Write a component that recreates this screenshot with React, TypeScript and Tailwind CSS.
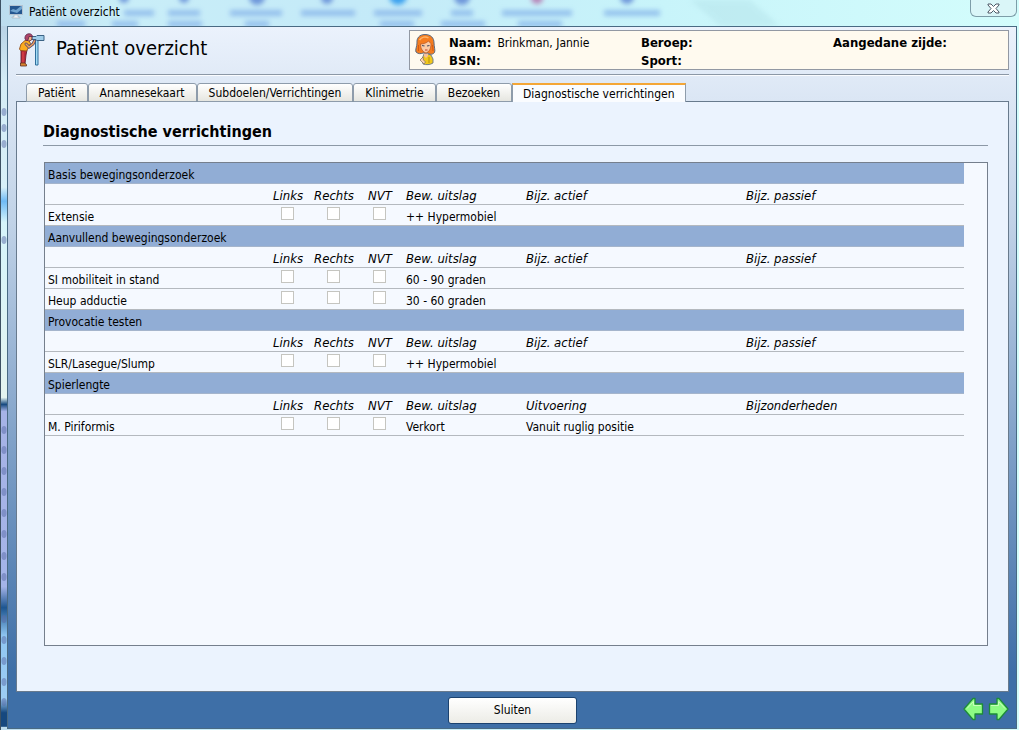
import { useState } from 'react'

type Row = { name: string; result: string; active?: string; passive?: string }
type Section = { title: string; columns: [string, string, string]; rows: Row[] }

const tabs = ['Patiënt', 'Anamnesekaart', 'Subdoelen/Verrichtingen', 'Klinimetrie', 'Bezoeken', 'Diagnostische verrichtingen']

const sections: Section[] = [
  {
    title: 'Basis bewegingsonderzoek',
    columns: ['Bew. uitslag', 'Bijz. actief', 'Bijz. passief'],
    rows: [{ name: 'Extensie', result: '++ Hypermobiel' }],
  },
  {
    title: 'Aanvullend bewegingsonderzoek',
    columns: ['Bew. uitslag', 'Bijz. actief', 'Bijz. passief'],
    rows: [
      { name: 'SI mobiliteit in stand', result: '60 - 90 graden' },
      { name: 'Heup adductie', result: '30 - 60 graden' },
    ],
  },
  {
    title: 'Provocatie testen',
    columns: ['Bew. uitslag', 'Bijz. actief', 'Bijz. passief'],
    rows: [{ name: 'SLR/Lasegue/Slump', result: '++ Hypermobiel' }],
  },
  {
    title: 'Spierlengte',
    columns: ['Bew. uitslag', 'Uitvoering', 'Bijzonderheden'],
    rows: [{ name: 'M. Piriformis', result: 'Verkort', active: 'Vanuit ruglig positie' }],
  },
]

const sides = ['Links', 'Rechts', 'NVT']

// toolbar captions of the window behind: x, y, width
const smudges = [
  [124, 13, 30], [168, 13, 32], [230, 13, 52], [301, 13, 54], [374, 13, 48], [451, 13, 22], [502, 13, 70], [604, 13, 56],
  [57, 24, 28], [112, 24, 26], [168, 24, 34], [245, 24, 24], [380, 24, 34], [441, 24, 44], [518, 24, 44],
]

// small marks that shine through the left window edge
const edgeDots = [112, 128, 144, 240, 430, 450, 471, 492, 513, 534, 556, 577, 619, 640, 661, 682, 702]

function GlassBackdrop() {
  return (
    <svg className="absolute inset-0 h-full w-full" aria-hidden="true">
      <defs>
        <linearGradient id="glass" x1="0" x2="1" y1="0" y2="0">
          <stop offset="0" stopColor="#bcdcee" />
          <stop offset="0.12" stopColor="#c9eef8" />
          <stop offset="0.35" stopColor="#c4eaf8" />
          <stop offset="0.65" stopColor="#c8f4fa" />
          <stop offset="1" stopColor="#d3fdfc" />
        </linearGradient>
        <filter id="soft" x="-50%" y="-50%" width="200%" height="200%">
          <feGaussianBlur stdDeviation="2.500" />
        </filter>
        <linearGradient id="edge" x1="0" x2="0" y1="0" y2="1">
          <stop offset="0" stopColor="#b9d3e6" />
          <stop offset="0.08" stopColor="#d4ecf6" />
          <stop offset="0.23" stopColor="#d8f0f8" />
          <stop offset="0.25" stopColor="#6fbaf5" />
          <stop offset="0.28" stopColor="#d5f4fb" />
          <stop offset="0.53" stopColor="#e4f4f0" />
          <stop offset="0.54" stopColor="#174a80" />
          <stop offset="0.55" stopColor="#a6b3e6" />
          <stop offset="0.8" stopColor="#a4b4e8" />
          <stop offset="0.83" stopColor="#1d5590" />
          <stop offset="0.87" stopColor="#8fc6f2" />
          <stop offset="0.96" stopColor="#9dcdf3" />
          <stop offset="0.98" stopColor="#16487f" />
        </linearGradient>
      </defs>
      <rect width="100%" height="100%" fill="url(#glass)" />
      <rect y="26" width="7" height="96%" fill="url(#edge)" />
      <path d="M690 0h60l30 26h-60z" fill="#b5e3ea" opacity="0.5" filter="url(#soft)" />
      <g filter="url(#soft)">
        {smudges.map(([x, y, w]) => (
          <rect key={`${x}-${y}`} x={x} y={y - 3} width={w} height="6" fill="#79a7e6" opacity="0.65" />
        ))}
        <g fill="#6e97da">
          <circle cx="124" cy="-2" r="5" />
          <circle cx="184" cy="-2" r="5" />
          <circle cx="257" cy="-3" r="8" />
          <circle cx="327" cy="-2" r="6" />
          <circle cx="398" cy="-4" r="9" fill="#3da2ef" />
          <circle cx="462" cy="-3" r="8" />
          <circle cx="537" cy="-2" r="6" fill="#b784b8" />
          <circle cx="627" cy="-3" r="7" />
        </g>
      </g>
      {edgeDots.map((y) => (
        <ellipse key={y} cx="4" cy={y} rx="2.500" ry="4" fill="#5a6ca8" opacity="0.5" />
      ))}
      <rect width="1" height="100%" fill="#3d5163" />
    </svg>
  )
}

function MonitorIcon() {
  return (
    <svg width="14" height="14" viewBox="0 0 14 14" aria-hidden="true">
      <rect x="0.5" y="0.5" width="13" height="9" fill="#e9f0f5" stroke="#b4c4d2" />
      <rect x="1" y="1" width="12" height="8" fill="#24568f" />
      <path d="M1 6l3-2 3 1 5-4h1v3L8 8z" fill="#6fa3cf" />
      <path d="M5 10h4v2h2v1H3v-1h2z" fill="#eef2f6" stroke="#9aa6b2" strokeWidth="0.5" />
    </svg>
  )
}

function SpyglassIcon() {
  return (
    <svg width="28" height="34" viewBox="0 0 28 34" aria-hidden="true">
      <path d="M17.500 7h2.500v25h-2.500z" fill="#a4dcf5" stroke="#2f6f9c" />
      <path d="M14 3.500h4l1-1h7v5h-7l-1-1h-4z" fill="#9fcdea" stroke="#3b6385" />
      <path d="M3 17l6 0-1 5-1 9H3l0-8z" fill="#b9283c" stroke="#64202f" strokeWidth="0.9" />
      <path d="M5 19v11" stroke="#e04a4a" />
      <path d="M2.500 30h4l2 1.500V33h-6z" fill="#d9822f" stroke="#5a3020" strokeWidth="0.8" />
      <path d="M1.500 16l1.500-5 4-3.500h4l1.500 3-2 4-2 3.500-6-.5z" fill="#fbab1f" stroke="#94501b" strokeWidth="0.9" />
      <path d="M8 11l3 3 4-3 1.500-3" fill="none" stroke="#51496b" strokeWidth="3" strokeLinecap="round" />
      <path d="M8 11l3 3 4-3 1.500-3" fill="none" stroke="#f0a05c" strokeWidth="1.400" strokeLinecap="round" />
      <circle cx="11" cy="5" r="3" fill="#f2b183" stroke="#6e2936" strokeWidth="0.8" />
      <path d="M7 6c-1-6 7-7 7.500-2.500H11L10 7C9 8 8 7.500 7 6z" fill="#b04468" stroke="#55284a" strokeWidth="0.8" />
    </svg>
  )
}

function PatientIcon() {
  return (
    <svg width="22" height="32" viewBox="0 0 22 32" aria-hidden="true">
      <path d="M9 20h4l3 1 2 4v4c-3 2-7 2-10 1l-1-5z" fill="#f2c81b" stroke="#66758a" strokeWidth="0.9" />
      <path d="M9 19h4v3l-2 2-2-2z" fill="#f7c09a" />
      <path d="M8 23l-3 3 4 4 1.500-2-2-2z" fill="#fbd5b5" stroke="#7e6a5c" strokeWidth="0.7" />
      <path d="M14 23v6" stroke="#b48d12" />
      <path d="M10 .5C4 .5 1.500 4.500 2 9c0 3-2 7-1 9 2 2 5 2 7 1h5c2 2 5 1.500 6.500-.5 1-2-.5-6-.5-9.500C19 4 16 .5 10 .5z" fill="#f57c1f" stroke="#596a82" />
      <path d="M5.500 10c3 0 6-1 8-3 1 1.500 2 2 2.500 2.500C16 15 14 18 11 19c-3-1-5.500-4-5.500-9z" fill="#fbcba6" stroke="#b5521e" strokeWidth="0.7" />
      <path d="M7 11.500l2.500.5M12 12l2.500-.5" stroke="#454e64" strokeWidth="1.200" />
      <path d="M10 16h2.500" stroke="#bd3c33" />
      <path d="M4.500 6c2-3 6-4 9-2" fill="none" stroke="#ffb367" strokeWidth="1.500" />
      <path d="M3.500 11v6M17.500 11l.5 6" stroke="#d35a14" />
    </svg>
  )
}

function ArrowIcon({ flip = false }: { flip?: boolean }) {
  return (
    <svg width="21" height="24" viewBox="0 0 21 24" className={flip ? '-scale-x-100' : ''} aria-hidden="true">
      <path d="M1 12L10 1.500h2V7h7.500v10H12v5.500h-2z" fill="#8dfc84" stroke="#1d8c39" strokeWidth="1.300" strokeLinejoin="round" />
      <path d="M4 11.500l6.500-7V8.500h7.500" fill="none" stroke="#c8ffbc" />
    </svg>
  )
}

function PatientField({ label, value }: { label: string; value?: string }) {
  return (
    <div className="flex gap-1.5 whitespace-nowrap">
      <dt className="text-[13px] font-bold">{label}</dt>
      <dd>{value}</dd>
    </div>
  )
}

function SectionRows({ section }: { section: Section }) {
  return (
    <tbody>
      <tr className="h-[21px] bg-[#91add5]">
        <th colSpan={7} scope="rowgroup" className="border-b border-[#a5b5cc] px-[3px] pt-[3px] text-left font-normal">
          {section.title}
        </th>
      </tr>
      <tr className="h-[21px] text-[13px] italic">
        <td className="border-b border-[#b4b9bf]" />
        {sides.map((side) => (
          <th key={side} scope="col" className="border-b border-[#b4b9bf] pt-[3px] text-center font-normal">{side}</th>
        ))}
        {section.columns.map((col) => (
          <th key={col} scope="col" className="border-b border-[#b4b9bf] px-[3px] pt-[3px] text-left font-normal">{col}</th>
        ))}
      </tr>
      {section.rows.map((row) => (
        <tr key={row.name} className="h-[21px]">
          <td className="border-b border-[#b4b9bf] px-[3px] pt-[3px]">{row.name}</td>
          {sides.map((side) => (
            <td key={side} className="border-b border-[#b4b9bf] pr-0.5 pb-1">
              <input
                type="checkbox"
                aria-label={`${row.name} ${side}`}
                className="mx-auto block size-[13px] appearance-none border border-[#c5c5c0] bg-white checked:bg-[#91add5]"
              />
            </td>
          ))}
          <td className="border-b border-[#b4b9bf] px-[3px] pt-[3px]">{row.result}</td>
          <td className="border-b border-[#b4b9bf] px-[3px] pt-[3px]">{row.active}</td>
          <td className="border-b border-[#b4b9bf] px-[3px] pt-[3px]">{row.passive}</td>
        </tr>
      ))}
    </tbody>
  )
}

export default function App() {
  const [active, setActive] = useState(tabs.length - 1)

  return (
    <div className="relative flex min-h-screen flex-col overflow-hidden pr-0.5 pb-px pl-[7px] font-['DejaVu_Sans_Condensed','DejaVu_Sans',sans-serif] text-xs leading-4 text-black">
      <GlassBackdrop />

      {/* Title bar */}
      <div className="relative flex h-[26px] items-start justify-between">
        <div className="flex items-center gap-1.5 pt-1 pl-0.5">
          <MonitorIcon />
          <span>Patiënt overzicht</span>
        </div>
        <button
          type="button"
          aria-label="Venster sluiten"
          className="flex h-[17px] w-[47px] items-center justify-center rounded-b-md border border-t-0 border-[#7d9da8] bg-[#daf6f8]"
        >
          <svg width="13" height="11" viewBox="0 0 13 11" aria-hidden="true">
            <path d="M1 1h3l2.500 2.500L9 1h3v1L9 5.500 12 9v1H9L6.500 7.500 4 10H1V9l3-3.500L1 2z" fill="#fff" stroke="#4c5966" />
          </svg>
        </button>
      </div>

      <div className="relative flex grow flex-col border border-[#496a83] bg-linear-to-b from-[#ebf2fc] from-0% via-[#c0d2e7] via-28% to-[#3e6fa7] to-92% pr-[7px] pl-2">
        {/* Header */}
        <header className="flex h-12 items-start justify-between border-b border-[#8c98a6] shadow-[0_1px_0_#fafcff]">
          <div className="flex items-center gap-2.5 pt-1.5 pl-0.5">
            <SpyglassIcon />
            <h1 className="pb-1 text-xl leading-6">Patiënt overzicht</h1>
          </div>
          <div className="mt-[3px] flex h-10 w-[61%] max-w-[600px] border border-[#9298a3] bg-[#fffaef] pt-[3px] pl-[5px]">
            <PatientIcon />
            <dl className="ml-3 grid grow grid-cols-[192px_192px_1fr] content-start leading-[18px]">
              <PatientField label="Naam:" value="Brinkman, Jannie" />
              <PatientField label="Beroep:" />
              <PatientField label="Aangedane zijde:" />
              <PatientField label="BSN:" />
              <PatientField label="Sport:" />
            </dl>
          </div>
        </header>

        {/* Tabs */}
        <div role="tablist" className="relative z-10 -mb-px flex items-end pt-2 pl-2.5">
          {tabs.map((tab, i) => (
            <button
              key={tab}
              type="button"
              role="tab"
              aria-selected={i === active}
              onClick={() => setActive(i)}
              className={
                i === active
                  ? 'h-[19px] border border-t-2 border-b-0 border-[#8e9cab] border-t-[#f4a636] bg-[#fafcff] px-2.5 whitespace-nowrap'
                  : 'h-[19px] rounded-t-[3px] border border-[#8e9cab] bg-linear-to-b from-white to-[#e6e6e0] px-[11px] whitespace-nowrap'
              }
            >
              {tab}
            </button>
          ))}
        </div>

        <main className="flex grow flex-col border border-[#687a8d] bg-[#ebf3fe] pt-5 pr-5 pb-[45px] pl-[26px]">
          <h2 className="border-b border-[#8c98a6] pb-[3px] text-base leading-5 font-bold">{tabs[active]}</h2>
          <div className="mt-4 ml-px grow border border-[#757f8d] bg-[#f5f9ff] pr-[23px]">
            <table className="w-full table-fixed border-separate border-spacing-0">
              <colgroup>
                <col className="w-[220px]" />
                <col className="w-[46px]" />
                <col className="w-[46px]" />
                <col className="w-[46px]" />
                <col className="w-[120px]" />
                <col className="w-[220px]" />
                <col />
              </colgroup>
              {sections.map((section) => (
                <SectionRows key={section.title} section={section} />
              ))}
            </table>
          </div>
        </main>

        {/* Footer */}
        <footer className="grid h-9 grid-cols-[1fr_auto_1fr] items-center">
          <button
            type="button"
            className="col-start-2 h-[27px] w-[129px] rounded-[3px] border border-[#1b426f] bg-linear-to-b from-white to-[#ecece6]"
          >
            Sluiten
          </button>
          <div className="flex justify-end gap-1 pb-0.5">
            <button type="button" aria-label="Vorige"><ArrowIcon /></button>
            <button type="button" aria-label="Volgende"><ArrowIcon flip /></button>
          </div>
        </footer>
      </div>
    </div>
  )
}
